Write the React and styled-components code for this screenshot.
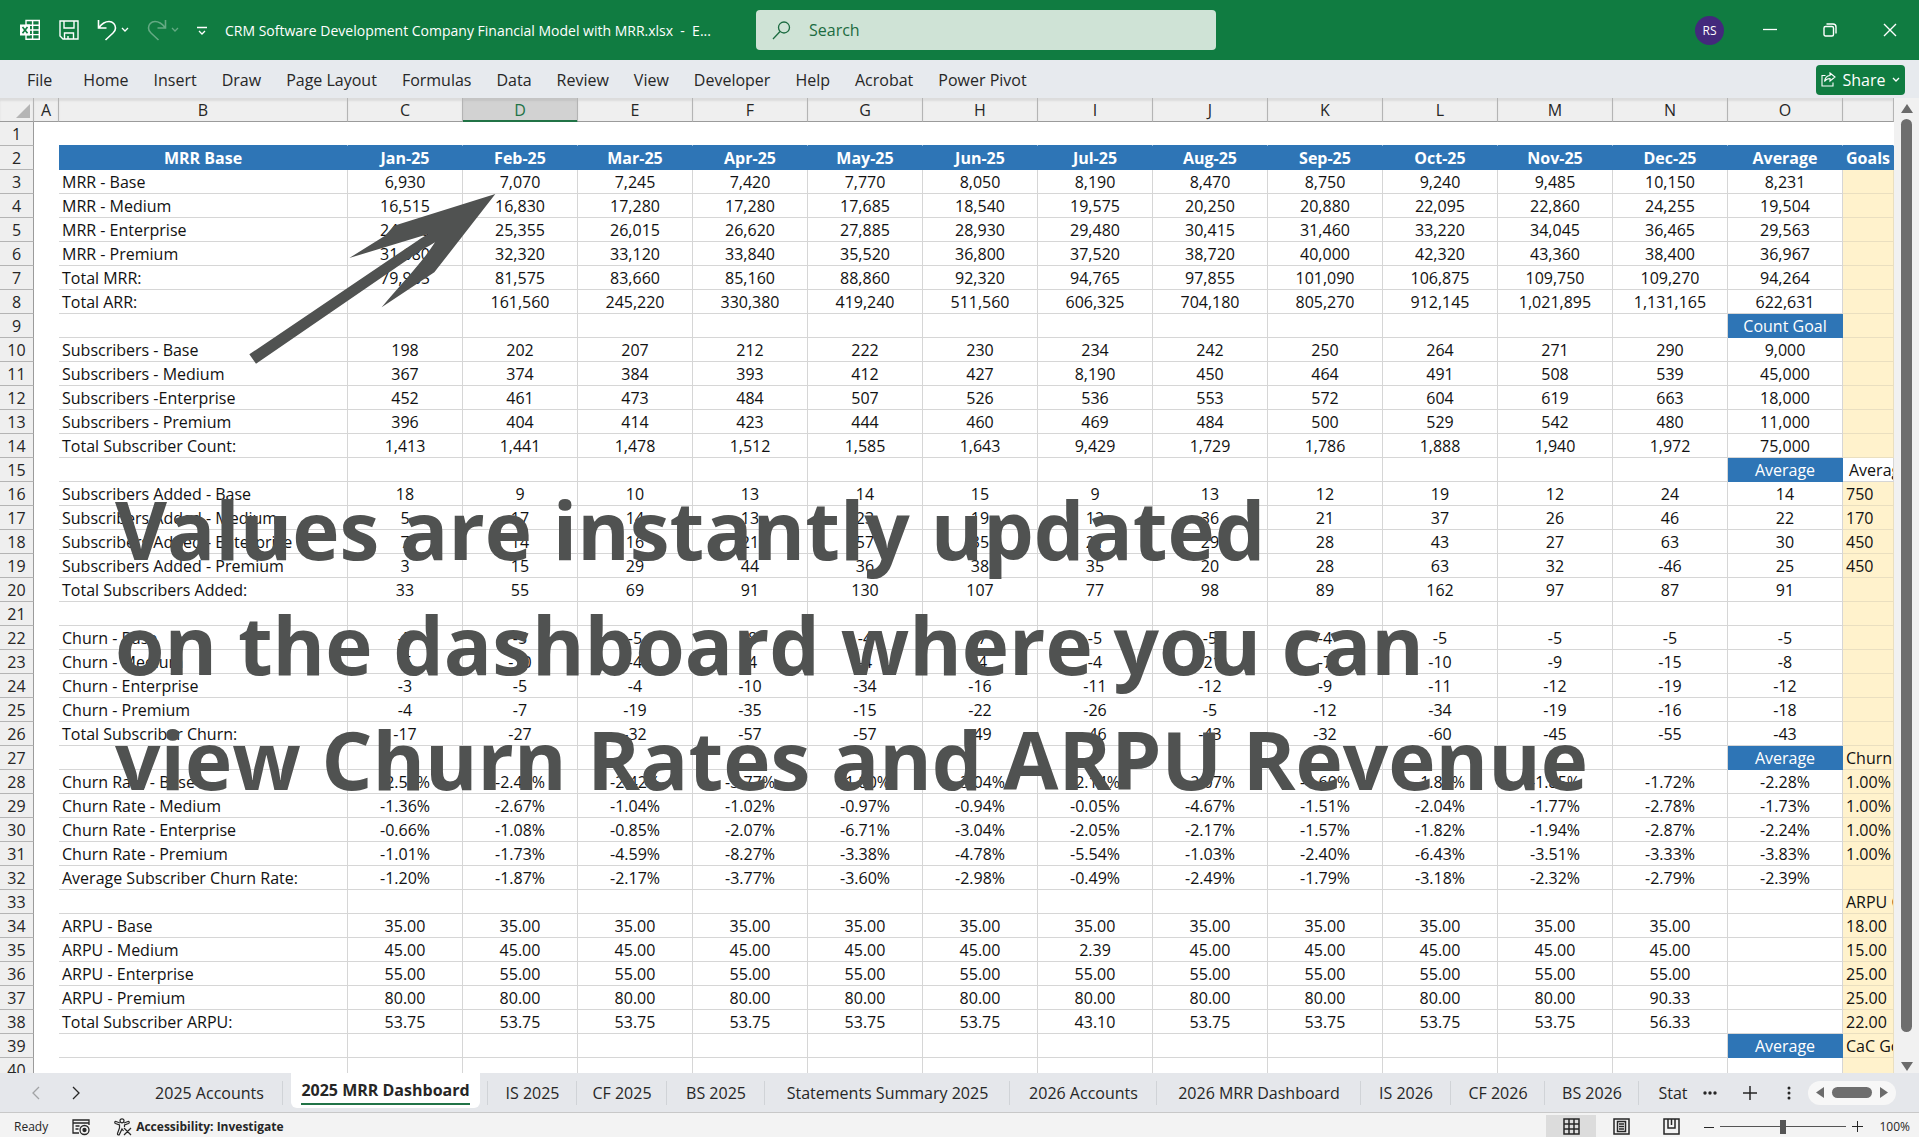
import { useState } from 'react'
import styled, { createGlobalStyle, css } from 'styled-components'

const GlobalStyle = createGlobalStyle`
    * { box-sizing: border-box; }
    body {
        margin: 0;
        background: #f3f3f3;
        font-family: "Open Sans", "Noto Sans", sans-serif;
        color: #262626;
    }
    button, input { font-family: inherit; color: inherit; }
    button { border: 0; padding: 0; background: none; cursor: pointer; }
`

const green = '#107c41'
const blue = '#2e75b6'
const cream = '#fff2cc'

const Page = styled.div`
    display: flex;
    flex-direction: column;
    height: 100vh;
    overflow: hidden;
`

/* title bar */

const TitleBar = styled.header`
    display: grid;
    grid-template-columns: minmax(0, 756fr) minmax(0, 460fr) minmax(0, 703fr);
    align-items: center;
    height: 60px;
    flex-shrink: 0;
    background: ${green};
    color: #fff;
`

const QuickAccess = styled.div`
    display: flex;
    align-items: center;
    padding-left: 19px;
    gap: 18px;
`

const IconButton = styled.button`
    display: flex;
    align-items: center;
    justify-content: center;
    gap: 4px;
    opacity: ${(props) => (props.$faded ? 0.35 : 1)};
`

const FileName = styled.h1`
    margin: 0;
    font-size: 14px;
    font-weight: 400;
    white-space: nowrap;
`

const SearchBox = styled.label`
    display: flex;
    align-items: center;
    gap: 16px;
    height: 40px;
    padding: 0 16px;
    border-radius: 4px;
    background: #cfe3d6;
    color: #1c6b41;
`

const SearchInput = styled.input`
    flex: 1;
    border: 0;
    outline: 0;
    background: none;
    font-size: 16px;
    &::placeholder { color: #1c6b41; opacity: 1; }
`

const WindowControls = styled.div`
    display: flex;
    align-items: center;
    justify-content: flex-end;
    gap: 39px;
    padding-right: 22px;
`

const WindowButtons = styled.div`
    display: flex;
    gap: 46px;
`

const Avatar = styled.span`
    display: flex;
    align-items: center;
    justify-content: center;
    width: 29px;
    height: 29px;
    border-radius: 50%;
    background: #43297c;
    font-size: 12px;
`

/* ribbon */

const Ribbon = styled.nav`
    display: flex;
    align-items: center;
    gap: 1px;
    height: 38px;
    flex-shrink: 0;
    padding: 1px 14px 0 15px;
    background: #e7eaee;
`

const RibbonTab = styled.button`
    padding: 0 12px;
    font-size: 16px;
    white-space: nowrap;
    &:first-child { margin-right: 6px; }
`

const ShareButton = styled.button`
    display: flex;
    align-items: center;
    justify-content: space-between;
    width: 89px;
    height: 30px;
    margin-left: auto;
    padding: 0 5px;
    border-radius: 4px;
    background: ${green};
    color: #fff;
    font-size: 16px;
`

/* sheet */

const Workspace = styled.main`
    position: relative;
    display: flex;
    flex: 1;
    min-height: 0;
`

const SheetView = styled.div`
    flex: 1;
    min-width: 0;
    overflow: hidden;
    background: #fff;
`

const Sheet = styled.table`
    width: 100%;
    table-layout: fixed;
    border-collapse: separate;
    border-spacing: 0;
    font-size: 16px;
    line-height: 21px;
    color: #111;
`

const Col = styled.col`
    width: ${(props) => props.$width};
`

const ColumnHead = styled.th`
    height: 24px;
    padding: 2px 0 0;
    background: #efefef;
    border-right: 1px solid #b4b4b4;
    border-bottom: 1px solid #9b9b9b;
    box-shadow: inset 0 3px 2px #dcdcdc;
    font-weight: 400;
    color: #262626;
    ${(props) => props.$selected && css`
        background: #d2d2d2;
        border-bottom-color: #217346;
        box-shadow: inset 0 -1px #217346, inset 0 3px 2px #c4c4c4;
        color: #217346;
    `}
`

const Corner = styled.td`
    padding: 0 3px 3px;
    background: #efefef;
    border-right: 1px solid #b4b4b4;
    border-bottom: 1px solid #9b9b9b;
    box-shadow: inset 0 3px 2px #dcdcdc;
    text-align: right;
    line-height: 0;
    vertical-align: bottom;
`

const RowHead = styled.th`
    height: 24px;
    padding: 2px 0 0;
    background: #efefef;
    border-right: 1px solid #9b9b9b;
    border-bottom: 1px solid #b4b4b4;
    font-weight: 400;
    color: #262626;
`

const Cell = styled.td`
    height: 24px;
    padding: 2px 3px 0;
    overflow: hidden;
    white-space: nowrap;
    text-align: ${(props) => (props.$left ? 'left' : 'center')};
    border-right: 1px solid ${(props) => (props.$plain ? 'transparent' : '#d6d6d6')};
    border-bottom: 1px solid ${(props) => (props.$plain ? 'transparent' : '#d6d6d6')};
    ${(props) => props.$edge && css`
        border-bottom-color: ${blue};
    `}
    ${(props) => props.$fill === 'goal' && css`
        background: ${cream};
        border-color: #eadfc0;
    `}
    ${(props) => props.$fill === 'head' && css`
        background: ${blue};
        border-color: ${blue};
        color: #fff;
    `}
    ${(props) => props.$bold && css`
        font-weight: 700;
    `}
    ${(props) => props.$indent && css`
        padding-left: 6px;
        padding-right: 0;
    `}
`

const Scrollbar = styled.div`
    display: flex;
    flex-direction: column;
    align-items: center;
    gap: 6px;
    width: 25px;
    padding: 6px 0 2px;
    background: #f1f1f1;
    color: #6b6b6b;
`

const ScrollThumb = styled.div`
    width: 11px;
    flex: 1;
    margin-bottom: 24px;
    border-radius: 6px;
    background: #6e6e6e;
`

const Caption = styled.p`
    position: absolute;
    top: 373px;
    left: 115px;
    margin: 0;
    font-size: 80px;
    font-weight: 700;
    line-height: 115px;
    white-space: pre;
    color: #505251;
    pointer-events: none;
`

const Arrow = styled.svg`
    position: absolute;
    top: 87px;
    left: 240px;
    pointer-events: none;
`

/* sheet tabs */

const TabBar = styled.nav`
    display: flex;
    align-items: center;
    height: 40px;
    flex-shrink: 0;
    background: #e5e7eb;
    border-bottom: 1px solid #c8c8c8;
`

const TabArrows = styled.div`
    display: flex;
    justify-content: space-between;
    width: 136px;
    padding: 0 55px 0 31px;
    flex-shrink: 0;
`

const TabList = styled.ul`
    display: flex;
    flex: 1;
    min-width: 0;
    height: 100%;
    margin: 0;
    padding: 0;
    overflow: hidden;
    list-style: none;
`

const TabItem = styled.li`
    display: flex;
    align-items: center;
    justify-content: center;
    flex-shrink: 0;
    width: ${(props) => props.$width}px;
    background: linear-gradient(#d0d3d7, #d0d3d7) right center / 1px 24px no-repeat;
    &:last-child { background: none; }
`

const SheetTab = styled.button`
    font-size: 16px;
    white-space: nowrap;
    ${(props) => props.$active && css`
        align-self: flex-start;
        height: 35px;
        padding: 0 10px;
        border-radius: 0 0 6px 6px;
        background: #fff;
        font-weight: 700;
    `}
`

const TabLabel = styled.span`
    display: block;
    ${(props) => props.$active && css`
        line-height: 26px;
        border-bottom: 2px solid #217346;
    `}
`

const TabTools = styled.div`
    display: flex;
    align-items: center;
    gap: 26px;
    padding-right: 23px;
`

const HorizontalScroll = styled.div`
    display: flex;
    align-items: center;
    justify-content: space-between;
    width: 88px;
    height: 24px;
    margin-left: -13px;
    padding: 0 8px;
    border-radius: 12px;
    background: #f7f7f7;
    color: #6b6b6b;
`

const HorizontalThumb = styled.div`
    width: 40px;
    height: 11px;
    border-radius: 6px;
    background: #6e6e6e;
`

/* status bar */

const StatusBar = styled.footer`
    display: flex;
    align-items: center;
    height: 24px;
    flex-shrink: 0;
    padding: 3px 9px 0 14px;
    background: #f3f3f3;
    font-size: 12px;
`

const StatusItem = styled.button`
    display: flex;
    align-items: center;
    gap: 4px;
    margin-left: 24px;
    font-size: 12px;
    font-weight: 700;
`

const Views = styled.div`
    display: flex;
    margin-left: auto;
`

const ViewButton = styled.button`
    display: flex;
    align-items: center;
    justify-content: center;
    width: 50px;
    height: 24px;
    background: ${(props) => (props.$active ? '#dcdcdc' : 'none')};
`

const Zoom = styled.div`
    display: flex;
    align-items: center;
    gap: 6px;
    margin-left: 8px;
`

const ZoomRange = styled.input`
    width: 126px;
    height: 14px;
    margin: 0;
    appearance: none;
    background: linear-gradient(#555, #555) center / 100% 1px no-repeat;
    &::-webkit-slider-thumb {
        appearance: none;
        width: 6px;
        height: 14px;
        background: #555;
    }
`

const ZoomValue = styled.output`
    margin-left: 10px;
`

const Chevron = ({ d = 'M1 1l3 3 3-3', w = 8, h = 6 }) => (
    <svg width={w} height={h} fill="none" stroke="currentColor" strokeWidth="1.3"><path d={d} /></svg>
)

const ribbonTabs = ['File', 'Home', 'Insert', 'Draw', 'Page Layout', 'Formulas', 'Data', 'Review', 'View', 'Developer', 'Help', 'Acrobat', 'Power Pivot']

const sheetTabs = [
    ['2025 Accounts', 147],
    ['2025 MRR Dashboard', 205],
    ['IS 2025', 89],
    ['CF 2025', 90],
    ['BS 2025', 98],
    ['Statements Summary 2025', 245],
    ['2026 Accounts', 147],
    ['2026 MRR Dashboard', 204],
    ['IS 2026', 90],
    ['CF 2026', 94],
    ['BS 2026', 94],
    ['Stat', 68],
]

const columns = 'ABCDEFGHIJKLMNO'.split('')

// one line per sheet row: label, twelve months, average, goal
const rows = [
    '',
    'MRR Base|Jan-25|Feb-25|Mar-25|Apr-25|May-25|Jun-25|Jul-25|Aug-25|Sep-25|Oct-25|Nov-25|Dec-25|Average|Goals',
    'MRR - Base|6,930|7,070|7,245|7,420|7,770|8,050|8,190|8,470|8,750|9,240|9,485|10,150|8,231',
    'MRR - Medium|16,515|16,830|17,280|17,280|17,685|18,540|19,575|20,250|20,880|22,095|22,860|24,255|19,504',
    'MRR - Enterprise|24,860|25,355|26,015|26,620|27,885|28,930|29,480|30,415|31,460|33,220|34,045|36,465|29,563',
    'MRR - Premium|31,680|32,320|33,120|33,840|35,520|36,800|37,520|38,720|40,000|42,320|43,360|38,400|36,967',
    'Total MRR:|79,985|81,575|83,660|85,160|88,860|92,320|94,765|97,855|101,090|106,875|109,750|109,270|94,264',
    'Total ARR:||161,560|245,220|330,380|419,240|511,560|606,325|704,180|805,270|912,145|1,021,895|1,131,165|622,631',
    '|||||||||||||Count Goal',
    'Subscribers - Base|198|202|207|212|222|230|234|242|250|264|271|290|9,000',
    'Subscribers - Medium|367|374|384|393|412|427|8,190|450|464|491|508|539|45,000',
    'Subscribers -Enterprise|452|461|473|484|507|526|536|553|572|604|619|663|18,000',
    'Subscribers - Premium|396|404|414|423|444|460|469|484|500|529|542|480|11,000',
    'Total Subscriber Count:|1,413|1,441|1,478|1,512|1,585|1,643|9,429|1,729|1,786|1,888|1,940|1,972|75,000',
    '|||||||||||||Average|Average',
    'Subscribers Added - Base|18|9|10|13|14|15|9|13|12|19|12|24|14|750',
    'Subscribers Added - Medium|5|17|14|13|23|19|12|36|21|37|26|46|22|170',
    'Subscribers Added - Enterprise|7|14|16|21|57|35|21|29|28|43|27|63|30|450',
    'Subscribers Added - Premium|3|15|29|44|36|38|35|20|28|63|32|-46|25|450',
    'Total Subscribers Added:|33|55|69|91|130|107|77|98|89|162|97|87|91',
    '',
    'Churn - Base|-5|-5|-5|-8|-4|-7|-5|-5|-4|-5|-5|-5|-5',
    'Churn - Medium|-5|-10|-4|-4|-4|-4|-4|-21|-7|-10|-9|-15|-8',
    'Churn - Enterprise|-3|-5|-4|-10|-34|-16|-11|-12|-9|-11|-12|-19|-12',
    'Churn - Premium|-4|-7|-19|-35|-15|-22|-26|-5|-12|-34|-19|-16|-18',
    'Total Subscriber Churn:|-17|-27|-32|-57|-57|-49|-46|-43|-32|-60|-45|-55|-43',
    '|||||||||||||Average|Churn Goals',
    'Churn Rate - Base|-2.53%|-2.48%|-2.42%|-3.77%|-1.80%|-3.04%|-2.14%|-2.07%|-1.60%|-1.89%|-1.85%|-1.72%|-2.28%|1.00%',
    'Churn Rate - Medium|-1.36%|-2.67%|-1.04%|-1.02%|-0.97%|-0.94%|-0.05%|-4.67%|-1.51%|-2.04%|-1.77%|-2.78%|-1.73%|1.00%',
    'Churn Rate - Enterprise|-0.66%|-1.08%|-0.85%|-2.07%|-6.71%|-3.04%|-2.05%|-2.17%|-1.57%|-1.82%|-1.94%|-2.87%|-2.24%|1.00%',
    'Churn Rate - Premium|-1.01%|-1.73%|-4.59%|-8.27%|-3.38%|-4.78%|-5.54%|-1.03%|-2.40%|-6.43%|-3.51%|-3.33%|-3.83%|1.00%',
    'Average Subscriber Churn Rate:|-1.20%|-1.87%|-2.17%|-3.77%|-3.60%|-2.98%|-0.49%|-2.49%|-1.79%|-3.18%|-2.32%|-2.79%|-2.39%',
    '||||||||||||||ARPU Goals',
    'ARPU - Base|35.00|35.00|35.00|35.00|35.00|35.00|35.00|35.00|35.00|35.00|35.00|35.00||18.00',
    'ARPU - Medium|45.00|45.00|45.00|45.00|45.00|45.00|2.39|45.00|45.00|45.00|45.00|45.00||15.00',
    'ARPU - Enterprise|55.00|55.00|55.00|55.00|55.00|55.00|55.00|55.00|55.00|55.00|55.00|55.00||25.00',
    'ARPU - Premium|80.00|80.00|80.00|80.00|80.00|80.00|80.00|80.00|80.00|80.00|80.00|90.33||25.00',
    'Total Subscriber ARPU:|53.75|53.75|53.75|53.75|53.75|53.75|43.10|53.75|53.75|53.75|53.75|56.33||22.00',
    '|||||||||||||Average|CaC Goals',
    '',
].map((line) => {
    const cells = line.split('|')
    return Array.from({ length: 15 }, (_, i) => cells[i] || '')
})

const fillOf = (row, col) => {
    if (row === 0) return null
    if (row === 1) return 'head'
    if (col === 13 && /Average|Count Goal/.test(rows[row][13])) return 'head'
    if (col === 14 && row !== 14) return 'goal'
    return null
}

const App = () => {
    const [activeTab, setActiveTab] = useState('2025 MRR Dashboard')
    const [zoom, setZoom] = useState(100)

    return (
        <Page>
            <GlobalStyle />
            <TitleBar>
                <QuickAccess>
                    <svg width="22" height="22" viewBox="0 0 22 22" fill="none" stroke="#fff" strokeWidth="1.4">
                        <path d="M7 1.5h13.3v18.8H7zM7 6.2h13M7 11h13M7 15.6h13M13.6 1.5v18.8" />
                        <rect x="1" y="5.5" width="10" height="11" fill="#fff" stroke="none" />
                        <path d="M3.500 8l5 6.200M8.500 8l-5 6.200" stroke={green} strokeWidth="1.7" />
                    </svg>
                    <IconButton aria-label="Save">
                        <svg width="20" height="22" viewBox="0 0 20 22" fill="none" stroke="#fff" strokeWidth="1.4">
                            <path d="M1 2h18v18H4l-3-3zM5 2v7h10V2M5.500 20v-6h9v6M9 20v-3" />
                        </svg>
                    </IconButton>
                    <IconButton aria-label="Undo">
                        <svg width="20" height="22" viewBox="0 0 20 22" fill="none" stroke="#fff" strokeWidth="1.6">
                            <path d="M1.500 1v8h8M2 8.500C5 4.500 8 2.500 12 2.500c4 0 6.500 3 6.500 6.500 0 2-1 3.700-2.500 5L8.500 21" />
                        </svg>
                        <Chevron />
                    </IconButton>
                    <IconButton aria-label="Redo" $faded>
                        <svg width="20" height="22" viewBox="0 0 20 22" fill="none" stroke="#fff" strokeWidth="1.6">
                            <path d="M18.500 1v8h-8M18 8.500C15 4.500 12 2.500 8 2.500c-4 0-6.500 3-6.500 6.500 0 2 1 3.700 2.500 5l7.500 7" />
                        </svg>
                        <Chevron />
                    </IconButton>
                    <IconButton aria-label="Customize Quick Access Toolbar">
                        <Chevron d="M0 1.500h10M2 5l3 3 3-3" w={10} h={9} />
                    </IconButton>
                    <FileName>CRM Software Development Company Financial Model with MRR.xlsx&nbsp; -&nbsp; E...</FileName>
                </QuickAccess>
                <SearchBox>
                    <svg width="19" height="19" viewBox="0 0 19 19" fill="none" stroke="currentColor" strokeWidth="1.3">
                        <circle cx="12" cy="6.500" r="5.500" />
                        <path d="M8 10.500L1 18" />
                    </svg>
                    <SearchInput type="text" placeholder="Search" aria-label="Search" />
                </SearchBox>
                <WindowControls>
                    <Avatar>RS</Avatar>
                    <WindowButtons>
                        <IconButton aria-label="Minimize">
                            <svg width="14" height="14" stroke="#fff" strokeWidth="1.3"><path d="M0 6.500h14" /></svg>
                        </IconButton>
                        <IconButton aria-label="Restore">
                            <svg width="14" height="14" fill="none" stroke="#fff" strokeWidth="1.4">
                                <rect x="1" y="3.5" width="9.5" height="9.5" rx="1.5" />
                                <path d="M3.500 1h6.500a3 3 0 0 1 3 3v6.500" />
                            </svg>
                        </IconButton>
                        <IconButton aria-label="Close">
                            <svg width="14" height="14" stroke="#fff" strokeWidth="1.4"><path d="M1 1l12 12M13 1L1 13" /></svg>
                        </IconButton>
                    </WindowButtons>
                </WindowControls>
            </TitleBar>

            <Ribbon>
                {ribbonTabs.map((tab) => <RibbonTab key={tab}>{tab}</RibbonTab>)}
                <ShareButton>
                    <svg width="15" height="15" viewBox="0 0 15 15" fill="none" stroke="#fff" strokeWidth="1.1">
                        <path d="M4.500 3.500H1V14h11v-3.500M9 1l5 4-5 4V6.500c-2.500 0-4 .8-5.500 3C4 6 6 3.700 9 3.500z" />
                    </svg>
                    Share
                    <Chevron />
                </ShareButton>
            </Ribbon>

            <Workspace>
                <SheetView>
                    <Sheet>
                        <colgroup>
                            <Col $width="34px" />
                            <Col $width="25px" />
                            <Col $width="289px" />
                            {columns.slice(2).map((c) => <Col key={c} $width="115px" />)}
                            <Col $width="auto" />
                        </colgroup>
                        <thead>
                            <tr>
                                <Corner><svg width="14" height="14" fill="#b5b5b5"><path d="M14 0v14H0z" /></svg></Corner>
                                {columns.map((c) => <ColumnHead key={c} scope="col" $selected={c === 'D'}>{c}</ColumnHead>)}
                                <ColumnHead />
                            </tr>
                        </thead>
                        <tbody>
                            {rows.map((cells, r) => (
                                <tr key={r}>
                                    <RowHead scope="row">{r + 1}</RowHead>
                                    <Cell $plain />
                                    {cells.map((value, c) => (
                                        <Cell
                                            key={c}
                                            $plain={r === 0}
                                            $edge={r === 0}
                                            $fill={fillOf(r, c)}
                                            $bold={r === 1}
                                            $left={(c === 0 && r !== 1) || c === 14}
                                            $indent={r === 14 && c === 14}
                                        >
                                            {value}
                                        </Cell>
                                    ))}
                                </tr>
                            ))}
                        </tbody>
                    </Sheet>
                </SheetView>
                <Scrollbar>
                    <svg width="12" height="9" fill="currentColor"><path d="M6 0l6 9H0z" /></svg>
                    <ScrollThumb />
                    <svg width="12" height="9" fill="currentColor"><path d="M6 9l6-9H0z" /></svg>
                </Scrollbar>
                <Arrow width="270" height="185" viewBox="0 0 810 555" fill="#505251">
                    <path d="M766 27L462 122L435 152L328 219L565 147Q545 158 528 170L28 508L48 536L548 193Q570 182 585 172C545 235 480 300 425 367L583 262Z" />
                </Arrow>
                <Caption>{'Values are instantly updated\non the dashboard where you can\nview Churn Rates and ARPU Revenue'}</Caption>
            </Workspace>

            <TabBar>
                <TabArrows>
                    <IconButton aria-label="Previous sheet" $faded><Chevron d="M8 1L2 7l6 6" w={9} h={14} /></IconButton>
                    <IconButton aria-label="Next sheet"><Chevron d="M1 1l6 6-6 6" w={9} h={14} /></IconButton>
                </TabArrows>
                <TabList>
                    {sheetTabs.map(([name, width]) => (
                        <TabItem key={name} $width={width}>
                            <SheetTab $active={name === activeTab} onClick={() => setActiveTab(name)}>
                                <TabLabel $active={name === activeTab}>{name}</TabLabel>
                            </SheetTab>
                        </TabItem>
                    ))}
                </TabList>
                <TabTools>
                    <IconButton aria-label="More sheets">
                        <svg width="14" height="4" fill="currentColor"><circle cx="2" cy="2" r="1.7" /><circle cx="7" cy="2" r="1.7" /><circle cx="12" cy="2" r="1.7" /></svg>
                    </IconButton>
                    <IconButton aria-label="New sheet">
                        <svg width="14" height="14" stroke="currentColor" strokeWidth="1.5"><path d="M7 0v14M0 7h14" /></svg>
                    </IconButton>
                    <IconButton aria-label="Resize tabs">
                        <svg width="12" height="14" fill="currentColor"><circle cx="6" cy="2" r="1.5" /><circle cx="6" cy="7" r="1.5" /><circle cx="6" cy="12" r="1.5" /></svg>
                    </IconButton>
                    <HorizontalScroll>
                        <svg width="8" height="11" fill="currentColor"><path d="M8 0v11L0 5.500z" /></svg>
                        <HorizontalThumb />
                        <svg width="8" height="11" fill="currentColor"><path d="M0 0v11l8-5.500z" /></svg>
                    </HorizontalScroll>
                </TabTools>
            </TabBar>

            <StatusBar>
                <span>Ready</span>
                <StatusItem aria-label="Record macro">
                    <svg width="18" height="18" viewBox="0 0 18 18" fill="none" stroke="currentColor" strokeWidth="1.3">
                        <path d="M7 15H1V2h16v5M1 5h16M3.500 8h4M3.500 11h3" />
                        <circle cx="12.5" cy="12" r="4.5" />
                        <circle cx="12.5" cy="12" r="1.5" fill="currentColor" />
                    </svg>
                </StatusItem>
                <StatusItem>
                    <svg width="18" height="18" viewBox="0 0 18 18" fill="none" stroke="currentColor" strokeWidth="1.2">
                        <circle cx="8" cy="2.8" r="2" />
                        <path d="M6 5L2 3.500C.6 3.200.4 5 1.500 5.500L5.500 7v3L3.500 15.500c-.3 1.600 1.500 2 2 .7L8 11l1.500 2M10 5l4-1.500c1.400-.3 1.600 1.500.5 2L10.500 7v2M10 10l7 7M17 10l-7 7" />
                    </svg>
                    Accessibility: Investigate
                </StatusItem>
                <Views>
                    <ViewButton $active aria-label="Normal">
                        <svg width="17" height="17" fill="none" stroke="currentColor" strokeWidth="1.5"><path d="M1 1h15v15H1zM1 6h15M1 11h15M6 1v15M11 1v15" /></svg>
                    </ViewButton>
                    <ViewButton aria-label="Page Layout">
                        <svg width="17" height="17" fill="none" stroke="currentColor" strokeWidth="1.5"><path d="M1 1h15v15H1zM4.500 3.500h8v10h-8zM6 6h5M6 8.500h5M6 11h5" /></svg>
                    </ViewButton>
                    <ViewButton aria-label="Page Break Preview">
                        <svg width="17" height="17" fill="none" stroke="currentColor" strokeWidth="1.5"><path d="M1 1h15v15H1zM5 1v9h7V1M8.500 1v6" /></svg>
                    </ViewButton>
                </Views>
                <Zoom>
                    <IconButton aria-label="Zoom out"><svg width="10" height="10" stroke="currentColor"><path d="M0 5.500h10" /></svg></IconButton>
                    <ZoomRange type="range" min="0" max="200" value={zoom} aria-label="Zoom" onChange={(e) => setZoom(Number(e.target.value))} />
                    <IconButton aria-label="Zoom in"><svg width="11" height="11" stroke="currentColor"><path d="M0 5.500h11M5.500 0v11" /></svg></IconButton>
                    <ZoomValue>{zoom}%</ZoomValue>
                </Zoom>
            </StatusBar>
        </Page>
    )
}

export default App
